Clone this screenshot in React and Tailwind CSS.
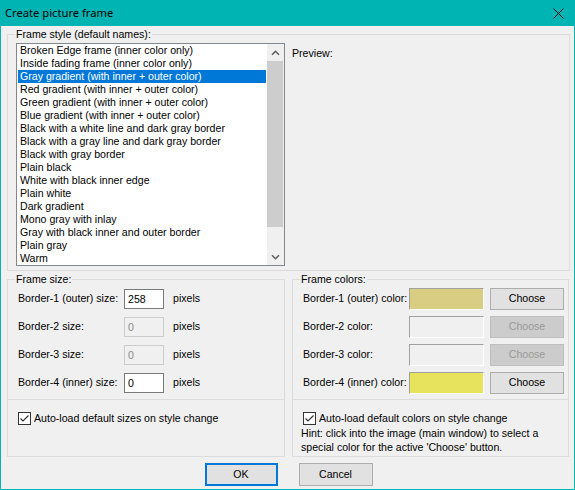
import React from 'react';

const styles = [
  'Broken Edge frame (inner color only)',
  'Inside fading frame (inner color only)',
  'Gray gradient (with inner + outer color)',
  'Red gradient (with inner + outer color)',
  'Green gradient (with inner + outer color)',
  'Blue gradient (with inner + outer color)',
  'Black with a white line and dark gray border',
  'Black with a gray line and dark gray border',
  'Black with gray border',
  'Plain black',
  'White with black inner edge',
  'Plain white',
  'Dark gradient',
  'Mono gray with inlay',
  'Gray with black inner and outer border',
  'Plain gray',
  'Warm',
];

const sizes = [
  { label: 'Border-1 (outer) size:', value: '258', enabled: true },
  { label: 'Border-2 size:', value: '0', enabled: false },
  { label: 'Border-3 size:', value: '0', enabled: false },
  { label: 'Border-4 (inner) size:', value: '0', enabled: true },
];

const colors = [
  { label: 'Border-1 (outer) color:', color: 'bg-[#d9cd84]', enabled: true },
  { label: 'Border-2 color:', color: 'bg-[#f0f0f0]', enabled: false },
  { label: 'Border-3 color:', color: 'bg-[#f0f0f0]', enabled: false },
  { label: 'Border-4 (inner) color:', color: 'bg-[#e8e35c]', enabled: true },
];

function Group({ label, className, children }) {
  return (
    <div className={`relative border border-[#dcdcdc] ${className}`}>
      <span className="absolute left-[7px] -top-[7px] bg-[#f0f0f0] px-[1px] leading-[13px]">{label}</span>
      {children}
    </div>
  );
}

function Checkbox({ label }) {
  return (
    <div className="flex items-center h-[13px] gap-[3px]">
      <svg width="13" height="13" viewBox="0 0 13 13" className="shrink-0">
        <rect x="0.5" y="0.5" width="12" height="12" fill="#fff" stroke="#333" />
        <path d="M2.5 6.5 L5 9 L10.5 3.5" fill="none" stroke="#333" strokeWidth="1.2" />
      </svg>
      <span className="leading-[13px] whitespace-nowrap">{label}</span>
    </div>
  );
}

function Chevron({ down }) {
  return (
    <svg width="9" height="6" viewBox="0 0 9 6">
      <path d={down ? 'M1 1.2 L4.5 4.7 L8 1.2' : 'M1 4.8 L4.5 1.3 L8 4.8'} fill="none" stroke="#606060" strokeWidth="1.6" />
    </svg>
  );
}

export default function App() {
  return (
    <div className="w-[575px] h-[490px] flex flex-col bg-[#00b4b4] font-['Liberation_Sans',Arial,sans-serif] text-[10.6px] text-black">
      {/* Title bar */}
      <div className="h-[26px] shrink-0 flex items-center justify-between pl-[5px] pr-[11px]">
        <span className="font-['Noto_Sans',sans-serif] text-[11.2px]">Create picture frame</span>
        <svg width="11" height="11" viewBox="0 0 11 11">
          <path d="M0.5 0.5 L10.5 10.5 M10.5 0.5 L0.5 10.5" stroke="#000" strokeWidth="1" />
        </svg>
      </div>

      <div className="flex-1 mx-[1px] mb-[1px] bg-[#f0f0f0] flex flex-col pl-[6px] pt-[8px]">
        {/* Frame style */}
        <Group label="Frame style (default names):" className="w-[563px] h-[237px] flex pl-[8px] pt-[8px]">
          <div className="w-[269px] h-[223px] border border-[#828790] bg-white flex">
            <div className="w-[250px] overflow-hidden">
              {styles.map((s, i) => (
                <div
                  key={s}
                  className={`h-[13px] leading-[13px] mx-[1px] pl-[2px] whitespace-nowrap ${i === 2 ? 'bg-[#0078d7] text-white' : ''}`}
                >
                  {s}
                </div>
              ))}
            </div>
            <div className="w-[17px] bg-[#f0f0f0] flex flex-col">
              <div className="h-[17px] flex items-center justify-center"><Chevron /></div>
              <div className="flex-1">
                <div className="h-[166px] mr-[1px] bg-[#cdcdcd]" />
              </div>
              <div className="h-[17px] flex items-center justify-center"><Chevron down /></div>
            </div>
          </div>
          <div className="ml-[7px] mt-[4px] leading-[13px]">Preview:</div>
        </Group>

        <div className="flex gap-[7px] mt-[8px]">
          {/* Frame size */}
          <Group label="Frame size:" className="w-[278px] h-[178px] flex flex-col pt-[8px]">
            <div className="flex flex-col gap-[6px] pl-[10px]">
              {sizes.map((r) => (
                <div key={r.label} className="h-[22px] flex items-center">
                  <span className="w-[106px] whitespace-nowrap">{r.label}</span>
                  <div
                    className={`w-[40px] h-[20px] border pl-[3px] leading-[18px] ${r.enabled ? 'border-[#7a7a7a] bg-white text-black' : 'border-[#cccccc] bg-[#f0f0f0] text-[#8a8a8a]'}`}
                  >
                    {r.value}
                  </div>
                  <span className="ml-[9px]">pixels</span>
                </div>
              ))}
            </div>
            <div className="border-t border-[#dcdcdc] mt-[5px]" />
            <div className="pl-[10px] mt-[12px]">
              <Checkbox label="Auto-load default sizes on style change" />
            </div>
          </Group>

          {/* Frame colors */}
          <Group label="Frame colors:" className="w-[277px] h-[178px] flex flex-col pt-[8px]">
            <div className="flex flex-col gap-[6px] pl-[10px]">
              {colors.map((r) => (
                <div key={r.label} className="h-[22px] flex items-center">
                  <span className="w-[106px] whitespace-nowrap">{r.label}</span>
                  <div className={`w-[75px] h-[22px] border border-t-[#a0a0a0] border-l-[#a0a0a0] border-r-white border-b-white ${r.color}`} />
                  <div
                    className={`ml-[6px] w-[74px] h-[22px] border flex items-center justify-center ${r.enabled ? 'bg-[#e1e1e1] border-[#adadad] text-black' : 'bg-[#cccccc] border-[#bfbfbf] text-[#9a9a9a]'}`}
                  >
                    Choose
                  </div>
                </div>
              ))}
            </div>
            <div className="border-t border-[#dcdcdc] mt-[5px]" />
            <div className="pl-[10px] mt-[12px]">
              <Checkbox label="Auto-load default colors on style change" />
            </div>
            <div className="pl-[8px] mt-[1px] leading-[14px]">
              <div>Hint: click into the image (main window) to select a</div>
              <div>special color for the active 'Choose' button.</div>
            </div>
          </Group>
        </div>

        {/* Dialog buttons */}
        <div className="flex justify-center gap-[21px] mt-[6px] pr-[4px]">
          <div className="w-[73px] h-[23px] border-2 border-[#0078d7] bg-[#e1e1e1] flex items-center justify-center">OK</div>
          <div className="w-[74px] h-[23px] border border-[#adadad] bg-[#e1e1e1] flex items-center justify-center">Cancel</div>
        </div>
      </div>
    </div>
  );
}
